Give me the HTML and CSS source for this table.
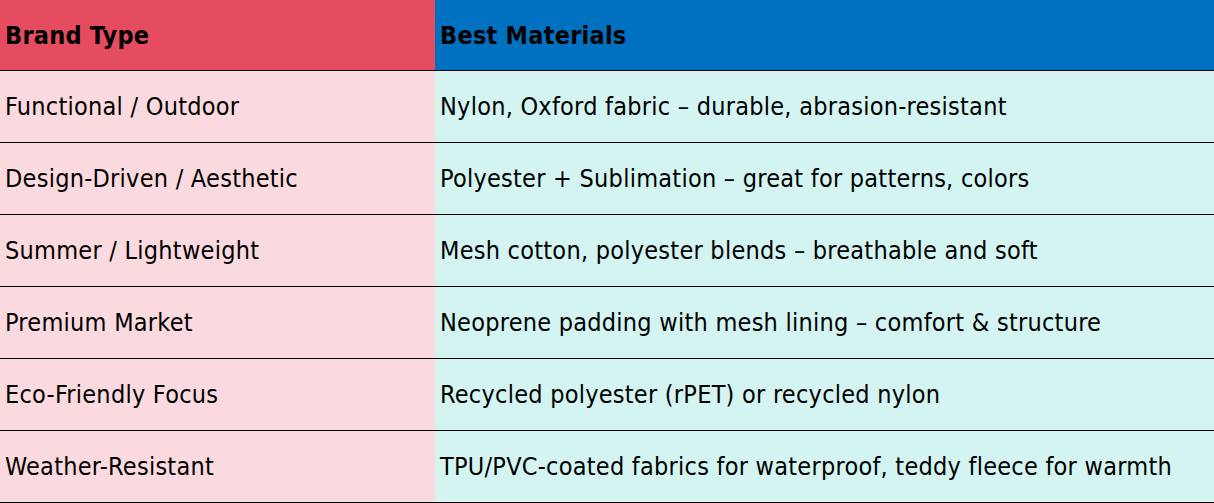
FILE: index.html
```html
<!DOCTYPE html>
<html>
<head>
<meta charset="utf-8">
<link rel="stylesheet" href="styles.css">
</head>
<body>
<table class="grid">
  <thead>
    <tr class="head">
      <th class="c1">Brand Type</th>
      <th class="c2">Best Materials</th>
    </tr>
  </thead>
  <tbody>
    <tr><td class="c1">Functional / Outdoor</td><td class="c2">Nylon, Oxford fabric – durable, abrasion-resistant</td></tr>
    <tr><td class="c1">Design-Driven / Aesthetic</td><td class="c2">Polyester + Sublimation – great for patterns, colors</td></tr>
    <tr><td class="c1">Summer / Lightweight</td><td class="c2">Mesh cotton, polyester blends – breathable and soft</td></tr>
    <tr><td class="c1">Premium Market</td><td class="c2">Neoprene padding with mesh lining – comfort &amp; structure</td></tr>
    <tr><td class="c1">Eco-Friendly Focus</td><td class="c2">Recycled polyester (rPET) or recycled nylon</td></tr>
    <tr><td class="c1">Weather-Resistant</td><td class="c2">TPU/PVC-coated fabrics for waterproof, teddy fleece for warmth</td></tr>
  </tbody>
</table>
</body>
</html>
```
FILE: styles.css
```css
html, body {
  margin: 0;
  padding: 0;
  background: #ffffff;
}
.grid {
  width: 1214px;
  border-collapse: collapse;
  table-layout: fixed;
  font-family: "DejaVu Sans Condensed", "DejaVu Sans", sans-serif;
  font-size: 25px;
  letter-spacing: 0.25px;
  color: #000;
}
.grid th, .grid td {
  padding: 0 0 0 5px;
  text-align: left;
  vertical-align: middle;
  border-bottom: 1px solid #000;
  white-space: nowrap;
}
.grid .c1 { width: 430px; }
.grid th {
  height: 70px;
  font-weight: bold;
}
.grid td {
  height: 71px;
  font-weight: normal;
}
.head .c1 { background: #e64c60; }
.head .c2 { background: #0070c0; }
tbody .c1 { background: #fbdadf; }
tbody .c2 { background: #d3f4f1; }
```
